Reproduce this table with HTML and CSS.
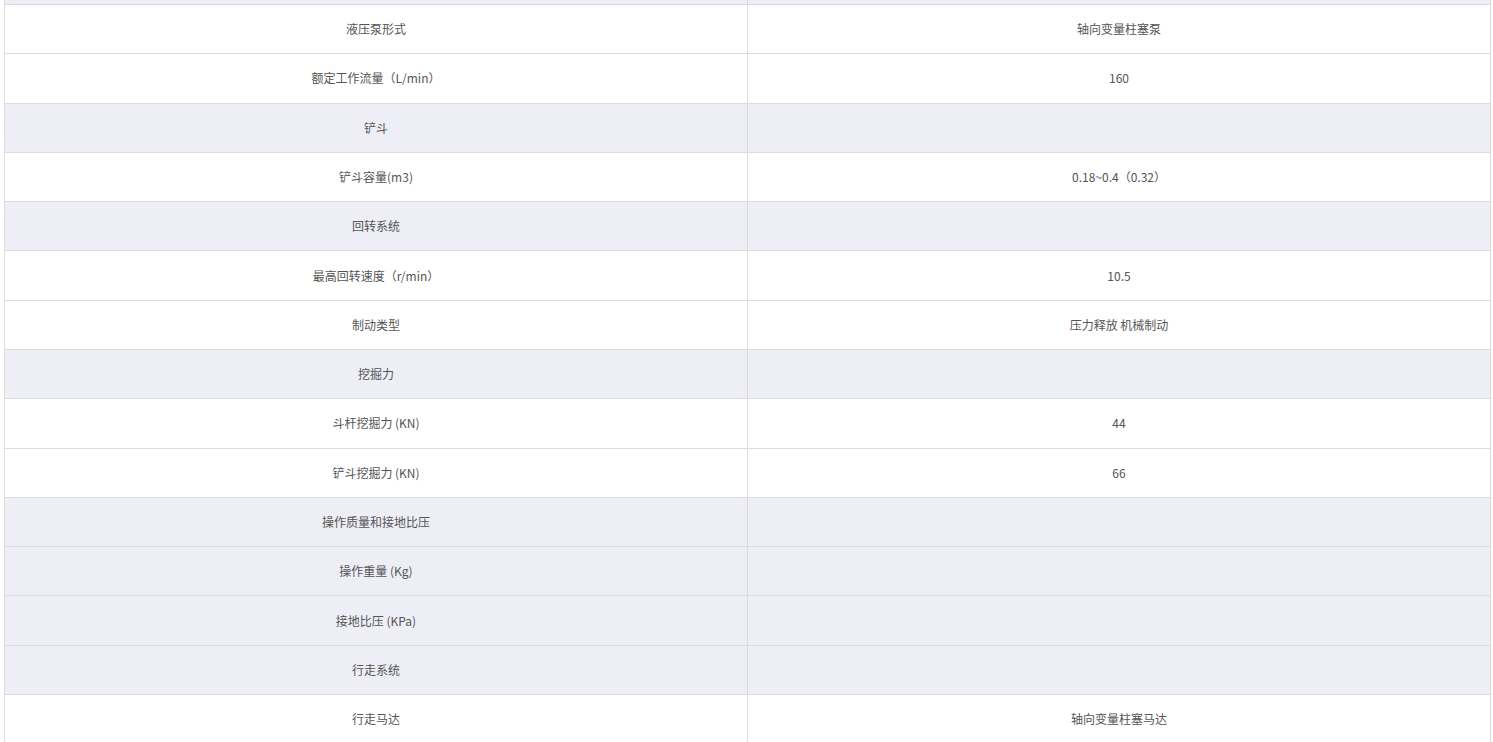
FILE: index.html
```html
<!DOCTYPE html>
<html lang="zh-CN">
<head>
<meta charset="utf-8">
<title>参数表</title>
<link rel="stylesheet" href="styles.css">
</head>
<body>
<div class="spec">
  <div class="row shade cut"><div class="cell"></div><div class="cell"></div></div>
  <div class="row"><div class="cell">液压泵形式</div><div class="cell">轴向变量柱塞泵</div></div>
  <div class="row"><div class="cell">额定工作流量（L/min）</div><div class="cell">160</div></div>
  <div class="row shade"><div class="cell">铲斗</div><div class="cell"></div></div>
  <div class="row"><div class="cell">铲斗容量(m3)</div><div class="cell">0.18~0.4（0.32）</div></div>
  <div class="row shade"><div class="cell">回转系统</div><div class="cell"></div></div>
  <div class="row"><div class="cell">最高回转速度（r/min）</div><div class="cell">10.5</div></div>
  <div class="row"><div class="cell">制动类型</div><div class="cell">压力释放 机械制动</div></div>
  <div class="row shade"><div class="cell">挖掘力</div><div class="cell"></div></div>
  <div class="row"><div class="cell">斗杆挖掘力 (KN)</div><div class="cell">44</div></div>
  <div class="row"><div class="cell">铲斗挖掘力 (KN)</div><div class="cell">66</div></div>
  <div class="row shade"><div class="cell">操作质量和接地比压</div><div class="cell"></div></div>
  <div class="row shade"><div class="cell">操作重量 (Kg)</div><div class="cell"></div></div>
  <div class="row shade"><div class="cell">接地比压 (KPa)</div><div class="cell"></div></div>
  <div class="row shade"><div class="cell">行走系统</div><div class="cell"></div></div>
  <div class="row"><div class="cell">行走马达</div><div class="cell">轴向变量柱塞马达</div></div>
</div>
</body>
</html>
```

FILE: styles.css
```css
html, body {
  margin: 0;
  padding: 0;
  background: #ffffff;
  overflow: hidden;
}

body {
  font-family: "Noto Sans CJK SC", "Noto Sans", "Liberation Sans", sans-serif;
  font-size: 12px;
  color: #555555;
}

.spec {
  margin-left: 4px;
  width: 1487px;
  box-sizing: border-box;
  border-left: 1px solid #dcdcdc;
  border-right: 1px solid #dcdcdc;
}

.row {
  display: grid;
  grid-template-columns: 742px 743px;
  height: 49.29px;
  box-sizing: border-box;
  border-bottom: 1px solid #dcdcdc;
  background: #ffffff;
}

.row.shade {
  background: #eeeef6;
}

.row.cut {
  height: 5px;
}

.cell {
  display: flex;
  align-items: center;
  justify-content: center;
  line-height: 18px;
  min-width: 0;
  overflow: hidden;
}

.cell + .cell {
  border-left: 1px solid #dcdcdc;
}
```
